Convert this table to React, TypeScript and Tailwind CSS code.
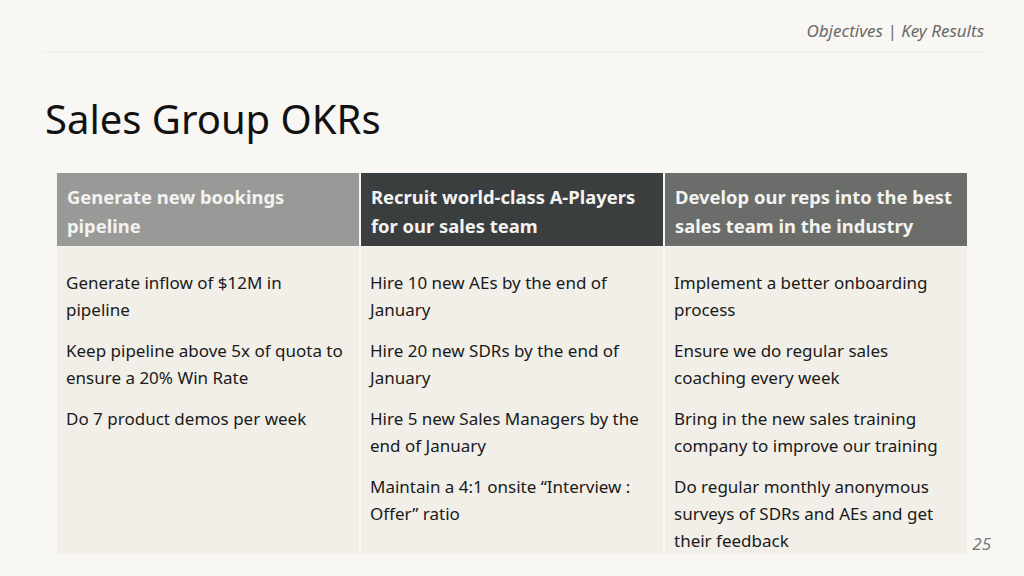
const columns = [
  {
    title: 'Generate new bookings pipeline',
    bg: 'bg-[#999a98]',
    items: [
      'Generate inflow of $12M in pipeline',
      'Keep pipeline above 5x of quota to ensure a 20% Win Rate',
      'Do 7 product demos per week',
    ],
  },
  {
    title: 'Recruit world-class A-Players for our sales team',
    bg: 'bg-[#3b3e3e]',
    items: [
      'Hire 10 new AEs by the end of January',
      'Hire 20 new SDRs by the end of January',
      'Hire 5 new Sales Managers by the end of January',
      'Maintain a 4:1 onsite \u201cInterview : Offer\u201d ratio',
    ],
  },
  {
    title: 'Develop our reps into the best sales team in the industry',
    bg: 'bg-[#6b6d6b]',
    items: [
      'Implement a better onboarding process',
      'Ensure we do regular sales coaching every week',
      'Bring in the new sales training company to improve our training',
      'Do regular monthly anonymous surveys of SDRs and AEs and get their feedback',
    ],
  },
];

export default function App() {
  return (
    <div
      className="relative w-[1024px] h-[576px] overflow-hidden bg-[#f8f7f3] pl-[42px] pr-[40px]"
      style={{ fontFamily: '"Noto Sans", "Open Sans", sans-serif' }}
    >
      {/* Top bar */}
      <div className="flex h-[52px] items-center justify-end border-b border-[#efede8] pt-[10px]">
        <span className="text-[17px] italic text-[#6a6a6a]">Objectives | Key Results</span>
      </div>

      <h1 className="mt-[43px] ml-[3px] text-[40px] leading-[48px] text-[#111111]">Sales Group OKRs</h1>

      {/* Table */}
      <div className="mt-[30px] ml-[15px] grid w-[910px] grid-cols-3 gap-x-[2px]">
        {columns.map((col) => (
          <div key={col.title} className="flex flex-col">
            <div
              className={`${col.bg} h-[73px] px-[10px] pt-[9px] text-[18.4px] font-bold leading-[29px] text-[#f3f3f1]`}
            >
              {col.title}
            </div>
            <div className="mt-[1px] h-[307px] bg-[#f1efe8] pl-[9px] pr-[10px] pt-[22px]">
              <div className="flex flex-col gap-[14px]">
                {col.items.map((item) => (
                  <p key={item} className="text-[17px] leading-[27px] text-[#1a1a1a]">
                    {item}
                  </p>
                ))}
              </div>
            </div>
          </div>
        ))}
      </div>

      <span className="absolute right-[33px] top-[531px] text-[17px] italic text-[#7a7a7a]">25</span>
    </div>
  );
}
